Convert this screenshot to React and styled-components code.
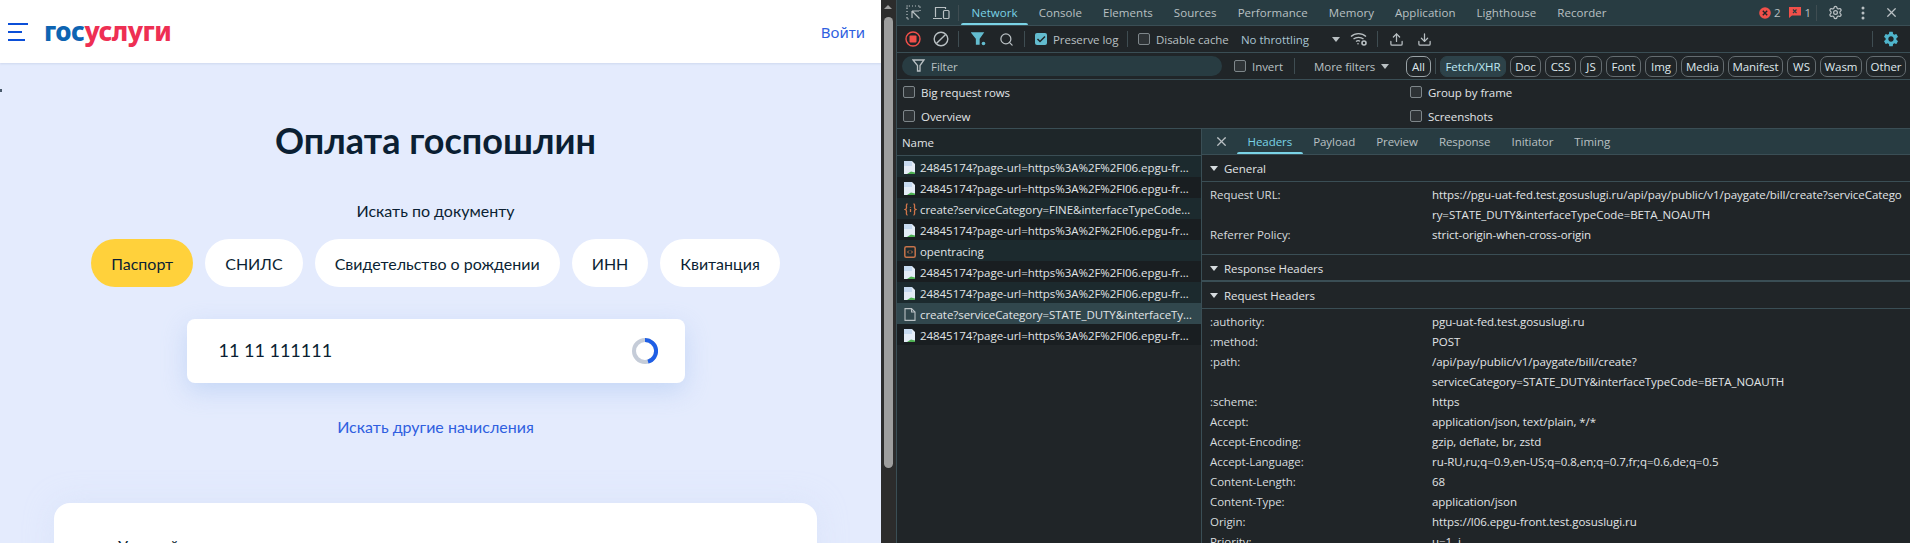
import React from 'react';
import styled, { createGlobalStyle } from 'styled-components';
import { X, Search, Upload, Download, Settings } from 'lucide-react';
import { MdSettings } from 'react-icons/md';

const GlobalStyle = createGlobalStyle`
  html, body { margin: 0; padding: 0; background: #202528; }
  * { box-sizing: border-box; }
`;

const Shell = styled.div`
  display: flex;
  width: 1910px;
  height: 543px;
  overflow: hidden;
`;

/* left: the page */
const Page = styled.div`
  position: relative;
  width: 881px;
  height: 543px;
  overflow: hidden;
  background: #e4ebfd;
  font-family: Lato, "Noto Sans", sans-serif;
  color: #0b1f33;
`;

const Header = styled.header`
  display: flex;
  align-items: center;
  height: 63px;
  background: #fff;
  padding: 0 16px 0 8px;
  box-shadow: 0 1px 2px rgba(120, 140, 180, 0.2);
`;

const Burger = styled.div`
  display: flex;
  flex-direction: column;
  gap: 6px;
  width: 20px;
`;

const BurgerLine = styled.span`
  display: block;
  height: 2px;
  width: ${p => p.$w}px;
  background: #0b4fd8;
`;

const Logo = styled.div`
  margin: -2px 0 0 16px;
  font-family: "Noto Sans", sans-serif;
  font-weight: 800;
  font-size: 26px;
  line-height: 30px;
  letter-spacing: -0.5px;
  color: #0d64b2;
  span { color: #ee2f53; }
`;

const Login = styled.a`
  margin-left: auto;
  font-family: "Noto Sans", sans-serif;
  font-size: 15px;
  color: #2f5fe0;
`;

const Main = styled.main`
  display: flex;
  flex-direction: column;
  align-items: center;
  padding: 57px 10px 0 0;
`;

const Stray = styled.i`
  position: absolute;
  left: 0;
  top: 89px;
  width: 2px;
  height: 3px;
  background: #4a5a6c;
`;

const Title = styled.h1`
  margin: 0;
  font-size: 36px;
  line-height: 40px;
  font-weight: 700;
`;

const Caption = styled.div`
  margin-top: 39px;
  font-size: 16px;
  line-height: 24px;
`;

const Chips = styled.div`
  display: flex;
  gap: 12px;
  margin-top: 16px;
`;

const Chip = styled.button`
  height: 48px;
  padding: 0 20px;
  border: 0;
  border-radius: 24px;
  background: ${p => (p.$active ? '#ffd13b' : '#fff')};
  color: #0b1f33;
  font: 16px Lato, "Noto Sans", sans-serif;
`;

const SearchBox = styled.div`
  display: flex;
  align-items: center;
  justify-content: space-between;
  flex: none;
  width: 498px;
  height: 64px;
  margin-top: 32px;
  padding: 0 27px 0 32px;
  background: #fff;
  border-radius: 8px;
  box-shadow: 0 8px 24px rgba(160, 190, 240, 0.45);
  font-size: 18px;
`;

const SearchValue = styled.span`
  padding-bottom: 2px;
`;

const MoreLink = styled.a`
  margin-top: 32px;
  font-size: 16px;
  line-height: 24px;
  color: #2f5fe0;
`;

const InfoCard = styled.section`
  flex: none;
  width: 763px;
  margin-top: 64px;
  padding: 31px 64px 40px;
  background: #fff;
  border-radius: 16px;
  font-size: 16px;
  line-height: 24px;
  box-shadow: 0 0 30px rgba(200, 215, 245, 0.35);
`;

/* page scrollbar */
const Scrollbar = styled.div`
  position: relative;
  width: 15px;
  height: 543px;
  background: #2c2c2c;
  padding: 17px 3px 0;
  &::before {
    content: '';
    position: absolute;
    left: 3px;
    top: 5px;
    border: 4.5px solid transparent;
    border-top: 0;
    border-bottom-color: #9e9e9e;
  }
`;

const Thumb = styled.div`
  height: 451px;
  background: #9e9e9e;
  border-radius: 5px;
`;

/* right: devtools */
const Dev = styled.div`
  flex: 1;
  min-width: 0;
  height: 543px;
  background: #202528;
  border-left: 1px solid #3a4e55;
  font-family: "Open Sans", "Noto Sans", sans-serif;
  font-size: 11.5px;
  letter-spacing: -0.05px;
  color: #e0e4e6;
`;

const TabBar = styled.div`
  display: flex;
  align-items: center;
  height: 26px;
  background: #283c42;
  border-bottom: 1px solid #3a4e55;
  padding-left: ${p => p.$pl || 0}px;
`;

const Tab = styled.div`
  position: relative;
  height: 25px;
  padding: 0 10.5px;
  line-height: 25px;
  font-weight: 500;
  letter-spacing: ${p => (p.$tight ? '-0.05px' : '0.05px')};
  white-space: nowrap;
  color: ${p => (p.$active ? '#7ad3e6' : '#b9c0c3')};
  ${p => p.$active && `
    &::after {
      content: '';
      position: absolute;
      left: 0;
      right: 0;
      bottom: 0;
      height: 2px;
      background: #7ad3e6;
      border-radius: 2px 2px 0 0;
    }
  `}
`;

const TabList = styled.div`
  display: flex;
  margin-left: ${p => p.$ml || 0}px;
`;

const RightGroup = styled.div`
  display: flex;
  align-items: center;
  margin-left: auto;
  padding-right: 5px;
`;

const Toolbar = styled.div`
  display: flex;
  align-items: center;
  height: 27px;
  border-bottom: 1px solid #3a4e55;
  padding-left: ${p => p.$pl || 0}px;
`;

const Slot = styled.div`
  flex: none;
  display: flex;
  align-items: center;
  justify-content: center;
  width: ${p => p.$w || 28}px;
  height: 24px;
  margin-left: ${p => p.$ml || 0}px;
  color: #b9c0c3;
`;

const Sep = styled.div`
  flex: none;
  width: 1px;
  height: 16px;
  background: #3f4d52;
  margin: 0 ${p => p.$r || 0}px 0 ${p => p.$l || 0}px;
`;

const Check = styled.label`
  flex: none;
  display: flex;
  align-items: center;
  gap: 6px;
  width: ${p => (p.$w ? `${p.$w}px` : 'auto')};
  white-space: nowrap;
  color: ${p => (p.$dim ? '#b9c0c3' : 'inherit')};
`;

const CheckBox = styled.span`
  flex: none;
  display: flex;
  align-items: center;
  justify-content: center;
  width: 12px;
  height: 12px;
  border-radius: 2px;
  border: ${p => (p.$on ? '0' : '1px solid #7e868a')};
  background: ${p => (p.$on ? '#63bccf' : '#2e3336')};
`;

const Throttle = styled.div`
  flex: none;
  width: 93px;
  margin-left: 13px;
  color: #a9c4d2;
  white-space: nowrap;
`;

const MoreFilters = styled.div`
  flex: none;
  width: 60px;
  color: #b9c0c3;
  white-space: nowrap;
`;

const Caret = styled.span`
  flex: none;
  width: 0;
  height: 0;
  border: 4px solid transparent;
  border-bottom: 0;
  border-top: 5px solid ${p => p.$color || '#b9c0c3'};
  margin-left: ${p => p.$ml || 0}px;
`;

const FilterInput = styled.div`
  flex: none;
  display: flex;
  align-items: center;
  gap: 4px;
  width: 320px;
  height: 20px;
  margin: 0 12px 0 5px;
  padding-left: 10px;
  border-radius: 10px;
  background: #283c42;
  color: #b9c0c3;
`;

const TypeChip = styled.div`
  flex: none;
  width: ${p => p.$w}px;
  height: 21px;
  margin-left: ${p => p.$ml ?? 4}px;
  line-height: 19px;
  text-align: center;
  border-radius: 7px;
  font-weight: 500;
  border: 1px solid ${p => (p.$filled ? '#2d4249' : p.$strong ? '#9aa3a7' : '#646c70')};
  background: ${p => (p.$filled ? '#2d4249' : 'transparent')};
  color: ${p => (p.$filled ? '#bfe9f3' : '#dfe8ec')};
`;

const SettingsGrid = styled.div`
  display: grid;
  grid-template-columns: 507px 1fr;
  grid-auto-rows: 24px;
  align-items: center;
  height: 49px;
  padding-left: 6px;
  border-bottom: 1px solid #3a4e55;
`;

const Split = styled.div`
  display: flex;
  height: 415px;
  overflow: hidden;
`;

const ListPane = styled.div`
  flex: none;
  width: 305px;
  border-right: 1px solid #3a4e55;
`;

const ListHead = styled.div`
  height: 27px;
  padding-left: 5px;
  line-height: 27px;
  background: #1e2629;
  border-bottom: 1px solid #3a4e55;
`;

const ListRow = styled.div`
  display: flex;
  align-items: center;
  height: 21px;
  padding: 2px 4px 0 7px;
  background: ${p => (p.$selected ? '#31474d' : p.$odd ? '#1c2a2e' : '#191e21')};
  &:last-child { background: #191e21; }
`;

const RowIcon = styled.span`
  flex: none;
  width: 16px;
  display: flex;
  align-items: center;
`;

const RowName = styled.span`
  white-space: nowrap;
`;

const DetailPane = styled.div`
  flex: 1;
  min-width: 0;
`;

const SectionHead = styled.div`
  display: flex;
  align-items: center;
  gap: 6px;
  height: 27px;
  padding: 1px 0 0 8px;
  border-bottom: ${p => (p.$thick ? 2 : 1)}px solid #3a4e55;
  font-weight: 500;
`;

const Pairs = styled.div`
  display: grid;
  grid-template-columns: 222px 1fr;
  padding: 3px 4px ${p => p.$pb || 0}px 8px;
  line-height: 20px;
  ${p => p.$line && 'border-bottom: 1px solid #3a4e55;'}
`;

const Key = styled.div`
  color: #d6dbde;
`;

const Value = styled.div`
  overflow-wrap: anywhere;
  word-break: ${p => (p.$breakAll ? 'break-all' : 'normal')};
`;

const Counter = styled.span`
  display: flex;
  align-items: center;
  gap: 3px;
  color: #b9c0c3;
  margin-right: ${p => p.$mr}px;
`;

function Spinner() {
  return (
    <svg width="26" height="26" viewBox="0 0 26 26">
      <circle cx="13" cy="13" r="11" fill="none" stroke="#c5ccd8" strokeWidth="4" />
      <path d="M13 2a11 11 0 0 1 3 21.6" fill="none" stroke="#1f5fe6" strokeWidth="4" />
    </svg>
  );
}

function InspectIcon() {
  return (
    <svg width="15" height="15" viewBox="0 0 15 15" fill="none" stroke="#b9c0c3" strokeWidth="1.2">
      <path d="M1 4V1h3M6 1h1M9 1h1M12 1h2v2M1 6v1M1 9v1M1 12v2h2M14 5v1" strokeDasharray="1.4 1" />
      <path d="M6 6h7M6 6v7M6.5 6.5l7 7" />
    </svg>
  );
}

function DeviceIcon() {
  return (
    <svg width="17" height="14" viewBox="0 0 17 14" fill="none" stroke="#b9c0c3" strokeWidth="1.2">
      <path d="M2.5 11V1.5h10V3M0 12.5h9" />
      <rect x="10.5" y="4.5" width="5.5" height="8" rx="1" />
    </svg>
  );
}

function RecordIcon() {
  return (
    <svg width="16" height="16" viewBox="0 0 16 16">
      <circle cx="8" cy="8" r="7" fill="none" stroke="#f1504a" strokeWidth="1.4" />
      <rect x="4.5" y="4.5" width="7" height="7" rx="1" fill="#f1504a" />
    </svg>
  );
}

function ClearIcon() {
  return (
    <svg width="16" height="16" viewBox="0 0 16 16" fill="none" stroke="#b9c0c3" strokeWidth="1.4">
      <circle cx="8" cy="8" r="6.8" />
      <path d="M3.4 12.6l9.2-9.2" />
    </svg>
  );
}

function FunnelIcon({ color = '#b9c0c3', filled, dot }) {
  return (
    <svg width="15" height="14" viewBox="0 0 15 14">
      <path
        d="M1 1h11L8 6.5V12H5.5V6.5z"
        fill={filled ? color : 'none'}
        stroke={color}
        strokeWidth="1.3"
      />
      {dot && <circle cx="12.5" cy="11.5" r="1.8" fill={color} />}
    </svg>
  );
}

function WifiIcon() {
  return (
    <svg width="18" height="14" viewBox="0 0 18 14" fill="none" stroke="#b9c0c3" strokeWidth="1.3">
      <path d="M1 4.5c4-3.8 11-3.8 15 0M3.500 7c2.600-2.300 7.400-2.300 10 0M6 9.500c1.200-1 3-1 4-.2" />
      <circle cx="8" cy="11.8" r=".8" fill="#b9c0c3" stroke="none" />
      <circle cx="14" cy="11" r="2" strokeWidth="1.6" />
    </svg>
  );
}

function ErrorBadge() {
  return (
    <svg width="12" height="12" viewBox="0 0 12 12">
      <circle cx="6" cy="6" r="5.8" fill="#f1504a" />
      <path d="M3.8 3.8l4.4 4.4M8.2 3.8L3.8 8.2" stroke="#202528" strokeWidth="1.4" />
    </svg>
  );
}

function IssueBadge() {
  return (
    <svg width="12" height="11" viewBox="0 0 12 11">
      <path d="M0 0h12v8.500H3L0 11z" fill="#f1504a" />
      <path d="M4 2.500l3.500 3.500M7.500 2.500L4 6" stroke="#283c42" strokeWidth="1.2" />
    </svg>
  );
}

function DotsIcon() {
  return (
    <svg width="4" height="14" viewBox="0 0 4 14" fill="#b9c0c3">
      <circle cx="2" cy="2" r="1.5" />
      <circle cx="2" cy="7" r="1.5" />
      <circle cx="2" cy="12" r="1.5" />
    </svg>
  );
}

function ImageFileIcon() {
  return (
    <svg width="11" height="13" viewBox="0 0 11 13">
      <path d="M0 0h8l3 3v10H0z" fill="#e4ecf6" />
      <path d="M0 0h8v5H0z" fill="#b4cfec" opacity=".6" />
      <path d="M3 13l4-2.500 4 1V13z" fill="#4caf50" />
    </svg>
  );
}

function ScriptIcon() {
  return (
    <svg width="13" height="13" viewBox="0 0 13 13" fill="none" stroke="#d0764a" strokeWidth="1.3">
      <path d="M3.500 1C2 1 2.500 3 2.500 5 2.500 6 1 6.500 1 6.500s1.500.5 1.500 1.500c0 2-.5 4 1 4M9.500 1c1.500 0 1 2 1 4 0 1 1.500 1.500 1.500 1.500S10.500 7 10.500 8c0 2 .5 4-1 4" />
      <path d="M6.500 4v.8M6.500 6v3" />
    </svg>
  );
}

function DocBoxIcon() {
  return (
    <svg width="12" height="12" viewBox="0 0 12 12" fill="none" stroke="#c5734a" strokeWidth="1.5">
      <rect x=".8" y=".8" width="10.400" height="10.400" rx="1.500" />
      <path d="M5 4.500L3.500 6 5 7.500M7 4.500L8.500 6 7 7.500" strokeWidth="1" />
    </svg>
  );
}

function PlainFileIcon() {
  return (
    <svg width="12" height="13" viewBox="0 0 12 13" fill="none" stroke="#b9c0c3" strokeWidth="1.1">
      <path d="M1 .6h6.500L11 4v8.400H1z" />
      <path d="M7.500 .6V4H11" />
    </svg>
  );
}

function TriangleDown() {
  return <Caret $color="#d6dbde" />;
}

const DOC_TYPES = [
  { name: 'Паспорт', active: true },
  { name: 'СНИЛС' },
  { name: 'Свидетельство о рождении' },
  { name: 'ИНН' },
  { name: 'Квитанция' },
];

const PANELS = ['Console', 'Elements', 'Sources', 'Performance', 'Memory', 'Application', 'Lighthouse', 'Recorder'];

const DETAIL_TABS = ['Payload', 'Preview', 'Response', 'Initiator', 'Timing'];

const TYPES = [
  ['Doc', 31], ['CSS', 31], ['JS', 22], ['Font', 35], ['Img', 32],
  ['Media', 43], ['Manifest', 55], ['WS', 29], ['Wasm', 42], ['Other', 40],
];

const PIXEL = '24845174?page-url=https%3A%2F%2Fl06.epgu-fr…';

const REQUESTS = [
  { name: PIXEL, icon: <ImageFileIcon /> },
  { name: PIXEL, icon: <ImageFileIcon /> },
  { name: 'create?serviceCategory=FINE&interfaceTypeCode…', icon: <ScriptIcon /> },
  { name: PIXEL, icon: <ImageFileIcon /> },
  { name: 'opentracing', icon: <DocBoxIcon /> },
  { name: PIXEL, icon: <ImageFileIcon /> },
  { name: PIXEL, icon: <ImageFileIcon /> },
  { name: 'create?serviceCategory=STATE_DUTY&interfaceTy…', icon: <PlainFileIcon />, selected: true },
  { name: PIXEL, icon: <ImageFileIcon /> },
];

const REQUEST_HEADERS = [
  [':authority:', 'pgu-uat-fed.test.gosuslugi.ru'],
  [':method:', 'POST'],
  [':path:', '/api/pay/public/v1/paygate/bill/create?serviceCategory=STATE_DUTY&interfaceTypeCode=BETA_NOAUTH'],
  [':scheme:', 'https'],
  ['Accept:', 'application/json, text/plain, */*'],
  ['Accept-Encoding:', 'gzip, deflate, br, zstd'],
  ['Accept-Language:', 'ru-RU,ru;q=0.9,en-US;q=0.8,en;q=0.7,fr;q=0.6,de;q=0.5'],
  ['Content-Length:', '68'],
  ['Content-Type:', 'application/json'],
  ['Origin:', 'https://l06.epgu-front.test.gosuslugi.ru'],
  ['Priority:', 'u=1, i'],
];

export default function App() {
  return (
    <Shell>
      <GlobalStyle />
      <Page>
        <Header>
          <Burger>
            <BurgerLine $w={20} />
            <BurgerLine $w={14} />
            <BurgerLine $w={17} />
          </Burger>
          <Logo>гос<span>услуги</span></Logo>
          <Login>Войти</Login>
        </Header>
        <Stray />
        <Main>
          <Title>Оплата госпошлин</Title>
          <Caption>Искать по документу</Caption>
          <Chips>
            {DOC_TYPES.map(d => (
              <Chip key={d.name} $active={d.active}>{d.name}</Chip>
            ))}
          </Chips>
          <SearchBox>
            <SearchValue>11 11 111111</SearchValue>
            <Spinner />
          </SearchBox>
          <MoreLink>Искать другие начисления</MoreLink>
          <InfoCard>Условий</InfoCard>
        </Main>
      </Page>

      <Scrollbar><Thumb /></Scrollbar>

      <Dev>
        <TabBar $pl={2}>
          <Slot><InspectIcon /></Slot>
          <Slot><DeviceIcon /></Slot>
          <Sep $l={3} $r={2} />
          <TabList>
            <Tab $active>Network</Tab>
            {PANELS.map(p => <Tab key={p}>{p}</Tab>)}
          </TabList>
          <RightGroup>
            <Counter $mr={9}><ErrorBadge /> 2</Counter>
            <Counter $mr={5}><IssueBadge /> 1</Counter>
            <Sep />
            <Slot $ml={4}><Settings size={15} /></Slot>
            <Slot><DotsIcon /></Slot>
            <Slot><X size={15} /></Slot>
          </RightGroup>
        </TabBar>

        <Toolbar $pl={2}>
          <Slot><RecordIcon /></Slot>
          <Slot><ClearIcon /></Slot>
          <Sep $l={3} $r={5} />
          <Slot><FunnelIcon color="#63bccf" filled dot /></Slot>
          <Slot><Search size={15} /></Slot>
          <Sep $l={4} $r={10} />
          <Check $w={92} $dim>
            <CheckBox $on>
              <svg width="10" height="10" viewBox="0 0 10 10" fill="none" stroke="#202528" strokeWidth="1.5">
                <path d="M1.500 5l2.500 2.500 5-5" />
              </svg>
            </CheckBox>
            Preserve log
          </Check>
          <Sep $r={10} />
          <Check $w={90} $dim><CheckBox />Disable cache</Check>
          <Throttle>No throttling</Throttle>
          <Caret $ml={-2} />
          <Slot $ml={2} $w={33}><WifiIcon /></Slot>
          <Sep $l={2} />
          <Slot $ml={4}><Upload size={15} /></Slot>
          <Slot><Download size={15} /></Slot>
          <RightGroup>
            <Sep />
            <Slot $ml={4}><MdSettings size={18} color="#4fb5cc" /></Slot>
          </RightGroup>
        </Toolbar>

        <Toolbar>
          <FilterInput><FunnelIcon />Filter</FilterInput>
          <Check $w={49} $dim><CheckBox />Invert</Check>
          <Sep $l={11} $r={19} />
          <MoreFilters>More filters</MoreFilters>
          <Caret $ml={7} />
          <TypeChip $w={25} $ml={17} $strong>All</TypeChip>
          <Sep $l={4} />
          <TypeChip $w={66} $filled>Fetch/XHR</TypeChip>
          {TYPES.map(([name, w]) => <TypeChip key={name} $w={w}>{name}</TypeChip>)}
        </Toolbar>

        <SettingsGrid>
          <Check><CheckBox />Big request rows</Check>
          <Check><CheckBox />Group by frame</Check>
          <Check><CheckBox />Overview</Check>
          <Check><CheckBox />Screenshots</Check>
        </SettingsGrid>

        <Split>
          <ListPane>
            <ListHead>Name</ListHead>
            {REQUESTS.map((r, i) => (
              <ListRow key={i} $odd={i % 2 === 0} $selected={r.selected}>
                <RowIcon>{r.icon}</RowIcon>
                <RowName>{r.name}</RowName>
              </ListRow>
            ))}
          </ListPane>

          <DetailPane>
            <TabBar $pl={12}>
              <X size={15} color="#b9c0c3" />
              <TabList $ml={8}>
                <Tab $active $tight>Headers</Tab>
                {DETAIL_TABS.map(t => <Tab key={t} $tight>{t}</Tab>)}
              </TabList>
            </TabBar>

            <SectionHead><TriangleDown /> General</SectionHead>
            <Pairs $line $pb={9}>
              <Key>Request URL:</Key>
              <Value $breakAll>https://pgu-uat-fed.test.gosuslugi.ru/api/pay/public/v1/paygate/bill/create?serviceCategory=STATE_DUTY&amp;interfaceTypeCode=BETA_NOAUTH</Value>
              <Key>Referrer Policy:</Key>
              <Value>strict-origin-when-cross-origin</Value>
            </Pairs>
            <SectionHead $thick><TriangleDown /> Response Headers</SectionHead>
            <SectionHead><TriangleDown /> Request Headers</SectionHead>
            <Pairs>
              {REQUEST_HEADERS.map(([k, v]) => (
                <React.Fragment key={k}>
                  <Key>{k}</Key>
                  <Value>{v}</Value>
                </React.Fragment>
              ))}
            </Pairs>
          </DetailPane>
        </Split>
      </Dev>
    </Shell>
  );
}
